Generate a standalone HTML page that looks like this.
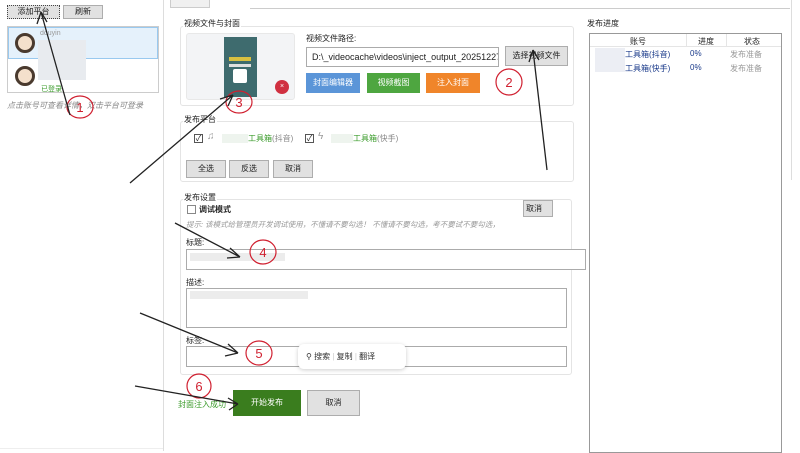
<!DOCTYPE html>
<html><head><meta charset="utf-8"><style>
*{margin:0;padding:0;box-sizing:border-box}
body{width:800px;height:451px;background:#fff;position:relative;overflow:hidden;font-family:"Liberation Sans","Noto Sans CJK SC",sans-serif;font-size:8px;color:#222}
.a{position:absolute}
.btn{position:absolute;background:#e1e1e1;border:1px solid #adadad;font-size:8px;text-align:center;color:#222}
.grp{position:absolute;border:1px solid #e4e4e4;border-radius:3px}
.lbl{position:absolute;background:#fff;font-size:8px;padding:0 1px}
.in{position:absolute;border:1px solid #ababab;background:#fff}
.cb{position:absolute;width:9px;height:9px;border:1px solid #555;background:#fff;font-size:8px;line-height:7px;text-align:center}
.blur{position:absolute;background:#e8ebef}
</style></head><body>
<!-- left -->
<div class="btn" style="left:7px;top:5px;width:53px;height:14px;line-height:12px;border-style:dotted;border-color:#444">添加平台</div>
<div class="btn" style="left:63px;top:5px;width:40px;height:14px;line-height:12px">刷新</div>
<div class="a" style="left:7px;top:26px;width:152px;height:67px;border:1px solid #ccc"></div>
<div class="a" style="left:8px;top:27px;width:150px;height:32px;background:#e5f1fb;border:1px solid #99c9ef"></div>
<div class="a" style="left:15px;top:33px;width:20px;height:20px;border-radius:50%;background:#f4e0cc;border:3px solid #4a3a2e"></div>
<div class="a" style="left:15px;top:66px;width:20px;height:20px;border-radius:50%;background:#f4e0cc;border:3px solid #4a3a2e"></div>
<div class="a" style="left:40px;top:30px;color:#999;font-size:7px">douyin</div>
<div class="blur" style="left:38px;top:40px;width:48px;height:40px"></div>
<div class="a" style="left:41px;top:84px;color:#3a9b2a;font-size:7px">已登录</div>
<div class="a" style="left:7px;top:100px;color:#888;font-style:italic;font-size:8px">点击账号可查看详情，双击平台可登录</div>
<div class="a" style="left:163px;top:0;width:1px;height:451px;background:#ddd"></div>
<div class="a" style="left:0;top:448px;width:163px;height:1px;background:#eee"></div>
<!-- tab -->
<div class="a" style="left:170px;top:0;width:40px;height:8px;border:1px solid #ccc;border-top:none;background:#f0f0f0"></div>
<div class="a" style="left:250px;top:8px;width:540px;height:1px;background:#ccc"></div>
<div class="a" style="left:791px;top:0;width:1px;height:180px;background:#ddd"></div>
<!-- group1 -->
<div class="grp" style="left:180px;top:26px;width:394px;height:80px"></div>
<div class="lbl" style="left:183px;top:18px">视频文件与封面</div>
<div class="a" style="left:186px;top:33px;width:109px;height:67px;background:#f3f4f6;border:1px solid #e8e8e8;border-radius:3px"></div>
<div class="a" style="left:224px;top:37px;width:33px;height:60px;background:#3e6b6e"></div>
<div class="a" style="left:229px;top:57px;width:22px;height:4px;background:#d8c040"></div>
<div class="a" style="left:229px;top:64px;width:22px;height:3px;background:#e0e0e0"></div>
<div class="a" style="left:233px;top:69px;width:14px;height:14px;background:#fff;border-radius:2px"></div>
<div class="a" style="left:275px;top:80px;width:14px;height:14px;border-radius:50%;background:#d03040;color:#fff;font-size:7px;text-align:center;line-height:14px">×</div>
<div class="a" style="left:306px;top:33px">视频文件路径:</div>
<div class="in" style="left:306px;top:47px;width:193px;height:20px;padding:4px 5px;font-size:9px;white-space:nowrap;overflow:hidden">D:\_videocache\videos\inject_output_20251227_</div>
<div class="btn" style="left:505px;top:46px;width:63px;height:20px;line-height:18px">选择视频文件</div>
<div class="a" style="left:306px;top:73px;width:54px;height:20px;background:#5b95d8;color:#fff;text-align:center;line-height:20px">封面编辑器</div>
<div class="a" style="left:367px;top:73px;width:53px;height:20px;background:#4ea640;color:#fff;text-align:center;line-height:20px">视频截图</div>
<div class="a" style="left:426px;top:73px;width:54px;height:20px;background:#f0852a;color:#fff;text-align:center;line-height:20px">注入封面</div>
<!-- group2 -->
<div class="grp" style="left:180px;top:121px;width:394px;height:61px"></div>
<div class="lbl" style="left:183px;top:114px">发布平台</div>
<div class="cb" style="left:194px;top:134px">✓</div>
<div class="a" style="left:207px;top:131px;color:#999;font-size:10px">♫</div>
<div class="blur" style="left:222px;top:134px;width:26px;height:9px;background:#eef4ee"></div>
<div class="a" style="left:248px;top:133px;color:#3a9b2a">工具箱<span style="color:#888">(抖音)</span></div>
<div class="cb" style="left:305px;top:134px">✓</div>
<div class="a" style="left:318px;top:131px;color:#999;font-size:10px">ϟ</div>
<div class="blur" style="left:331px;top:134px;width:22px;height:9px;background:#eef4ee"></div>
<div class="a" style="left:353px;top:133px;color:#3a9b2a">工具箱<span style="color:#888">(快手)</span></div>
<div class="btn" style="left:186px;top:160px;width:40px;height:18px;line-height:16px">全选</div>
<div class="btn" style="left:229px;top:160px;width:40px;height:18px;line-height:16px">反选</div>
<div class="btn" style="left:273px;top:160px;width:40px;height:18px;line-height:16px">取消</div>
<!-- group3 -->
<div class="grp" style="left:180px;top:199px;width:392px;height:176px"></div>
<div class="lbl" style="left:183px;top:192px">发布设置</div>
<div class="cb" style="left:187px;top:205px;border-color:#888"></div>
<div class="a" style="left:199px;top:204px;font-weight:bold">调试模式</div>
<div class="btn" style="left:523px;top:200px;width:30px;height:17px;line-height:15px;text-align:left;padding-left:2px">取消</div>
<div class="a" style="left:186px;top:219px;color:#999;font-style:italic;font-size:7.5px;white-space:nowrap">提示: 该模式给管理员开发调试使用，不懂请不要勾选！ 不懂请不要勾选，考不要试不要勾选，</div>
<div class="a" style="left:186px;top:237px">标题:</div>
<div class="in" style="left:186px;top:249px;width:400px;height:21px"></div>
<div class="blur" style="left:190px;top:253px;width:95px;height:8px;background:#ececec"></div>
<div class="a" style="left:186px;top:277px">描述:</div>
<div class="in" style="left:186px;top:288px;width:381px;height:40px"></div>
<div class="blur" style="left:190px;top:291px;width:118px;height:8px;background:#ececec"></div>
<div class="a" style="left:186px;top:335px">标签:</div>
<div class="in" style="left:186px;top:346px;width:381px;height:21px"></div>
<div class="a" style="left:298px;top:344px;width:108px;height:25px;background:#fff;border-radius:6px;box-shadow:0 1px 4px rgba(0,0,0,.2);font-size:8px;line-height:25px;padding-left:8px;color:#333;white-space:nowrap">⚲ 搜索 <span style="color:#ccc">|</span> 复制 <span style="color:#ccc">|</span> 翻译</div>
<div class="a" style="left:178px;top:399px;color:#3a9b2a">封面注入成功</div>
<div class="a" style="left:233px;top:390px;width:68px;height:26px;background:#3a7d1e;color:#fff;text-align:center;line-height:26px">开始发布</div>
<div class="btn" style="left:307px;top:390px;width:53px;height:26px;line-height:24px">取消</div>
<!-- right -->
<div class="lbl" style="left:586px;top:18px">发布进度</div>
<div class="a" style="left:589px;top:33px;width:193px;height:420px;border:1px solid #999"></div>
<div class="a" style="left:590px;top:34px;width:191px;height:13px;border-bottom:1px solid #e5e5e5"></div>
<div class="a" style="left:686px;top:34px;width:1px;height:13px;background:#e5e5e5"></div>
<div class="a" style="left:726px;top:34px;width:1px;height:13px;background:#e5e5e5"></div>
<div class="a" style="left:630px;top:36px">账号</div>
<div class="a" style="left:698px;top:36px">进度</div>
<div class="a" style="left:744px;top:36px">状态</div>
<div class="blur" style="left:595px;top:48px;width:30px;height:24px;background:#eceef4"></div>
<div class="a" style="left:625px;top:49px;color:#1a3a8a">工具箱(抖音)</div>
<div class="a" style="left:690px;top:49px;color:#1a3a8a">0%</div>
<div class="a" style="left:730px;top:49px;color:#999">发布准备</div>
<div class="a" style="left:625px;top:63px;color:#1a3a8a">工具箱(快手)</div>
<div class="a" style="left:690px;top:63px;color:#1a3a8a">0%</div>
<div class="a" style="left:730px;top:63px;color:#999">发布准备</div>
<!-- annotations -->
<svg class="a" style="left:0;top:0" width="800" height="451" viewBox="0 0 800 451" fill="none">
<g stroke="#d02030" stroke-width="1.2">
<ellipse cx="80" cy="107" rx="13" ry="11"/><ellipse cx="509" cy="82" rx="13" ry="13"/><ellipse cx="239" cy="102" rx="13" ry="11"/><ellipse cx="263" cy="252" rx="13" ry="12"/><ellipse cx="259" cy="353" rx="13" ry="12"/><ellipse cx="199" cy="386" rx="12" ry="12"/>
</g>
<g fill="#d02030" font-size="13" font-family="Liberation Sans" text-anchor="middle">
<text x="80" y="112">1</text><text x="509" y="87">2</text><text x="239" y="107">3</text><text x="263" y="257">4</text><text x="259" y="358">5</text><text x="199" y="391">6</text>
</g>
<g stroke="#222" stroke-width="1.3">
<path d="M70 115 L41 12 M41 12 L37 24 M41 12 L47 22"/>
<path d="M547 170 L533 50 M533 50 L529 62 M533 50 L539 60"/>
<path d="M130 183 L233 95 M233 95 L220 99 M233 95 L228 106"/>
<path d="M175 223 L240 257 M240 257 L230 248 M240 257 L227 258"/>
<path d="M140 313 L238 353 M238 353 L228 344 M238 353 L225 356"/>
<path d="M135 386 L238 404 M238 404 L228 398 M238 404 L229 410"/>
</g>
</svg>
</body></html>
